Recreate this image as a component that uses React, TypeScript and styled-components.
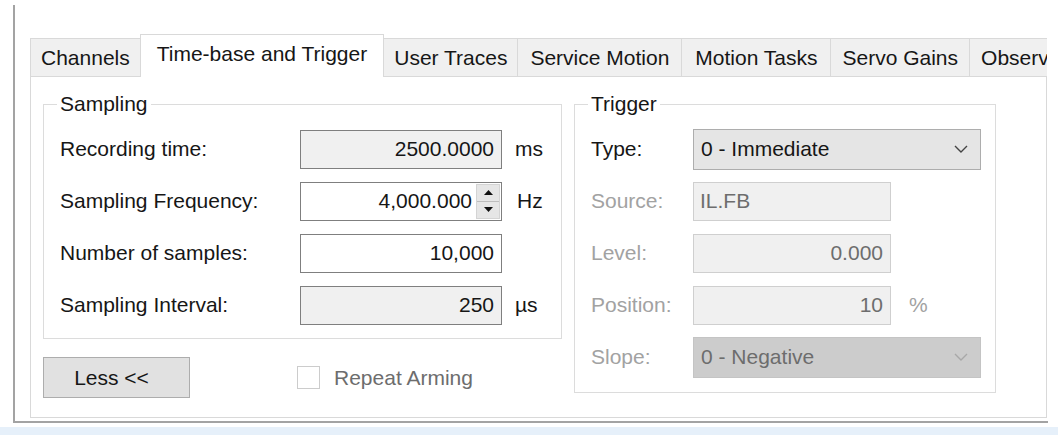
import React from "react";
import styled, { createGlobalStyle, css } from "styled-components";

const GlobalStyle = createGlobalStyle`
  html, body {
    margin: 0;
    padding: 0;
    background: #ffffff;
  }
  body {
    font-family: "Liberation Sans", Arial, sans-serif;
    font-size: 21px;
    color: #161616;
  }
`;

const Page = styled.div`
  width: 1058px;
  height: 435px;
  overflow: hidden;
  display: flex;
  flex-direction: column;
`;

const Frame = styled.div`
  margin: 5px 10px 0 13px;
  border-left: 2px solid #a3a3a3;
  border-bottom: 2px solid #a3a3a3;
  padding: 29px 1px 3px 15px;
  display: flex;
  flex-direction: column;
`;

const StatusBand = styled.div`
  margin-top: 4px;
  flex: 1;
  background: #e6f0fa;
`;

const TabStrip = styled.div`
  display: flex;
  align-items: flex-start;
  height: 43px;
  margin-bottom: -1px;
  position: relative;
  z-index: 1;
  overflow: hidden;
`;

const Tab = styled.div<{ $active?: boolean; $pad: number }>`
  flex: none;
  box-sizing: border-box;
  margin-top: 4px;
  height: 38px;
  padding: 0 ${(p) => p.$pad}px;
  display: flex;
  align-items: center;
  background: #f0f0f0;
  border: 1px solid #d9d9d9;
  border-bottom: none;
  white-space: nowrap;
  & + & {
    margin-left: -1px;
  }
  ${(p) =>
    p.$active &&
    css`
      margin-top: 0;
      height: 43px;
      padding-bottom: 5px;
      background: #ffffff;
      position: relative;
      z-index: 2;
    `}
`;

const Panel = styled.div`
  box-sizing: border-box;
  height: 342px;
  border: 1px solid #d9d9d9;
  background: #ffffff;
  padding: 27px 0 0 12px;
  display: flex;
  align-items: flex-start;
  gap: 12px;
`;

const Column = styled.div`
  display: flex;
  flex-direction: column;
`;

const GroupBox = styled.div<{ $width: number; $height: number }>`
  box-sizing: border-box;
  width: ${(p) => p.$width}px;
  height: ${(p) => p.$height}px;
  border: 1px solid #dcdcdc;
  padding: 0 0 0 16px;
  display: flex;
  flex-direction: column;
`;

const GroupTitle = styled.div`
  align-self: flex-start;
  margin: -13px 0 0 -3px;
  padding: 0 3px;
  line-height: 24px;
  background: #ffffff;
`;

const Rows = styled.div<{ $top: number }>`
  margin-top: ${(p) => p.$top}px;
  display: flex;
  flex-direction: column;
  gap: 12px;
`;

const Row = styled.div`
  display: flex;
  align-items: center;
  height: 40px;
`;

const Label = styled.span<{ $width: number; $dim?: boolean }>`
  flex: none;
  width: ${(p) => p.$width}px;
  color: ${(p) => (p.$dim ? "#a2a2a2" : "#161616")};
`;

type FieldKind = "readonly" | "edit" | "disabled";

const Field = styled.div<{ $kind: FieldKind; $width: number; $align?: "left" | "right" }>`
  flex: none;
  box-sizing: border-box;
  width: ${(p) => p.$width}px;
  height: 39px;
  display: flex;
  align-items: center;
  justify-content: ${(p) => (p.$align === "left" ? "flex-start" : "flex-end")};
  padding: 0 7px 0 6px;
  border: 1px solid;
  ${(p) =>
    p.$kind === "readonly" &&
    css`
      background: #f0f0f0;
      border-color: #7f7f7f;
      color: #161616;
    `}
  ${(p) =>
    p.$kind === "edit" &&
    css`
      background: #ffffff;
      border-color: #7f7f7f;
      color: #161616;
    `}
  ${(p) =>
    p.$kind === "disabled" &&
    css`
      background: #f0f0f0;
      border-color: #cfcfcf;
      color: #6d6d6d;
    `}
`;

const SpinField = styled(Field)`
  padding: 0 1px 0 6px;
  gap: 4px;
`;

const Spinner = styled.div`
  flex: none;
  align-self: stretch;
  margin: 1px 0;
  width: 22px;
  display: flex;
  flex-direction: column;
  background: #e6e6e6;
  border: 1px solid #d4d4d4;
`;

const SpinHalf = styled.div<{ $down?: boolean }>`
  flex: 1;
  display: flex;
  align-items: center;
  justify-content: center;
  ${(p) => p.$down && "border-top: 1px solid #bdbdbd;"}
`;

const Unit = styled.span<{ $dim?: boolean; $gap: number }>`
  margin-left: ${(p) => p.$gap}px;
  color: ${(p) => (p.$dim ? "#a2a2a2" : "#161616")};
`;

const Combo = styled.div<{ $disabled?: boolean }>`
  flex: none;
  box-sizing: border-box;
  width: 288px;
  height: 41px;
  display: flex;
  align-items: center;
  justify-content: space-between;
  padding: 0 12px 0 7px;
  border: 1px solid ${(p) => (p.$disabled ? "#c4c4c4" : "#adadad")};
  background: ${(p) => (p.$disabled ? "#cccccc" : "#e5e5e5")};
  color: ${(p) => (p.$disabled ? "#6d6d6d" : "#161616")};
`;

const Footer = styled.div`
  margin-top: 18px;
  display: flex;
  align-items: center;
`;

const Button = styled.div`
  box-sizing: border-box;
  width: 147px;
  height: 41px;
  display: flex;
  align-items: center;
  justify-content: center;
  padding-right: 10px;
  background: #e1e1e1;
  border: 1px solid #adadad;
`;

const CheckRow = styled.div`
  margin-left: 107px;
  display: flex;
  align-items: center;
  gap: 14px;
  color: #6d6d6d;
`;

const CheckBox = styled.div`
  box-sizing: border-box;
  width: 23px;
  height: 23px;
  border: 1px solid #cccccc;
  background: #ffffff;
`;

const Chevron = ({ color }: { color: string }) => (
  <svg width="14" height="8" viewBox="0 0 14 8">
    <polyline points="1,1 7,7 13,1" fill="none" stroke={color} strokeWidth="1.4" />
  </svg>
);

const Arrow = ({ down }: { down?: boolean }) => (
  <svg width="9" height="5" viewBox="0 0 9 5">
    <polygon points={down ? "0,0 9,0 4.5,5" : "0,5 9,5 4.5,0"} fill="#111" />
  </svg>
);

const tabs: { title: string; pad: number }[] = [
  { title: "Channels", pad: 10 },
  { title: "Time-base and Trigger", pad: 16 },
  { title: "User Traces", pad: 10 },
  { title: "Service Motion", pad: 12 },
  { title: "Motion Tasks", pad: 13 },
  { title: "Servo Gains", pad: 11 },
  { title: "Observer", pad: 11 },
];

const ACTIVE_TAB = "Time-base and Trigger";

export default function App() {
  return (
    <Page>
      <GlobalStyle />
      <Frame>
        <TabStrip>
          {tabs.map((t) => (
            <Tab key={t.title} $pad={t.pad} $active={t.title === ACTIVE_TAB}>
              {t.title}
            </Tab>
          ))}
        </TabStrip>
        <Panel>
          <Column>
            <GroupBox $width={519} $height={235}>
              <GroupTitle>Sampling</GroupTitle>
              <Rows $top={13}>
                <Row>
                  <Label $width={240}>Recording time:</Label>
                  <Field $kind="readonly" $width={202}>2500.0000</Field>
                  <Unit $gap={13}>ms</Unit>
                </Row>
                <Row>
                  <Label $width={240}>Sampling Frequency:</Label>
                  <SpinField $kind="edit" $width={202}>
                    4,000.000
                    <Spinner>
                      <SpinHalf>
                        <Arrow />
                      </SpinHalf>
                      <SpinHalf $down>
                        <Arrow down />
                      </SpinHalf>
                    </Spinner>
                  </SpinField>
                  <Unit $gap={15}>Hz</Unit>
                </Row>
                <Row>
                  <Label $width={240}>Number of samples:</Label>
                  <Field $kind="edit" $width={202}>10,000</Field>
                </Row>
                <Row>
                  <Label $width={240}>Sampling Interval:</Label>
                  <Field $kind="readonly" $width={202}>250</Field>
                  <Unit $gap={13}>µs</Unit>
                </Row>
              </Rows>
            </GroupBox>
            <Footer>
              <Button>Less &lt;&lt;</Button>
              <CheckRow>
                <CheckBox />
                Repeat Arming
              </CheckRow>
            </Footer>
          </Column>
          <GroupBox $width={422} $height={289}>
            <GroupTitle>Trigger</GroupTitle>
            <Rows $top={13}>
              <Row>
                <Label $width={102}>Type:</Label>
                <Combo>
                  0 - Immediate
                  <Chevron color="#444" />
                </Combo>
              </Row>
              <Row>
                <Label $width={102} $dim>Source:</Label>
                <Field $kind="disabled" $width={198} $align="left">IL.FB</Field>
              </Row>
              <Row>
                <Label $width={102} $dim>Level:</Label>
                <Field $kind="disabled" $width={198}>0.000</Field>
              </Row>
              <Row>
                <Label $width={102} $dim>Position:</Label>
                <Field $kind="disabled" $width={198}>10</Field>
                <Unit $gap={18} $dim>%</Unit>
              </Row>
              <Row>
                <Label $width={102} $dim>Slope:</Label>
                <Combo $disabled>
                  0 - Negative
                  <Chevron color="#a8a8a8" />
                </Combo>
              </Row>
            </Rows>
          </GroupBox>
        </Panel>
      </Frame>
      <StatusBand />
    </Page>
  );
}
